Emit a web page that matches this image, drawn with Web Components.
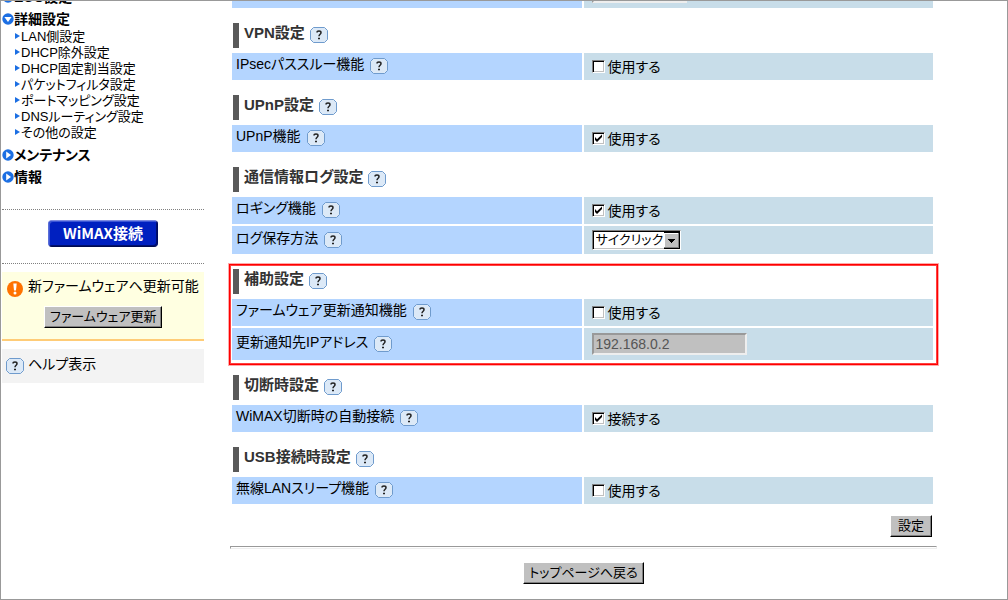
<!DOCTYPE html>
<html lang="ja">
<head>
<meta charset="utf-8">
<title>詳細設定 - その他の設定</title>
<style>
  body { margin: 0; background: #fff; color: #000; font: 14px/16px "Liberation Sans", "Noto Sans CJK JP", sans-serif; font-feature-settings: "palt"; }
</style>
</head>
<body>
<router-page></router-page>
<script>
const define = (name, html, setup) => {
  const template = document.createElement('template');
  template.innerHTML = html;
  customElements.define(name, class extends HTMLElement {
    constructor() {
      super();
      this.attachShadow({ mode: 'open' }).append(template.content.cloneNode(true));
    }
    connectedCallback() {
      if (setup && !this.ready) { this.ready = true; setup(this, this.shadowRoot); }
    }
  });
};

define('help-button', `
  <style>
    :host { display: inline-flex; flex: none; }
    button { display: flex; margin: 0; padding: 0; border: 0; background: none; cursor: help; }
    svg { display: block; }
  </style>
  <button type="button" aria-label="ヘルプ">
    <svg width="18" height="16" viewBox="0 0 18 16">
      <path d="M3.5.5h11l3 3v9l-3 3h-11l-3-3v-9z" fill="#dce9f7" stroke="#6f9bcd"/>
      <path d="M7 5.500C7 3.600 11 3.400 11 5.700C11 7.300 9 7.200 9 9.300M8 11.500h2" fill="none" stroke="#222" stroke-width="1.500"/>
    </svg>
  </button>`);

define('bevel-button', `
  <style>
    :host { display: inline-block; }
    button { display: block; margin: 0; min-width: 42px; height: 22px; padding: 0 5px; font: inherit; font-size: 13px; line-height: 18px; font-feature-settings: inherit; color: #000; background: #c0c0c0;
      border: 1px solid; border-color: #fff #000 #000 #fff; box-shadow: inset -1px -1px #808080; white-space: nowrap; border-radius: 0; }
  </style>
  <button type="button"><slot></slot></button>`);

define('nav-group', `
  <style>
    :host { display: block; margin-top: 6px; }
    a { display: flex; align-items: center; font-size: 14px; line-height: 16px; font-weight: bold; color: #000; text-decoration: none; white-space: nowrap; }
    ul { margin: 2px 0 0; padding: 0; list-style: none; }
    svg { flex: none; }
    :host(:not([open])) ul { display: none; }
  </style>
  <a href="#"><svg width="12" height="12" viewBox="0 0 12 12"><circle cx="6" cy="6" r="5.7" fill="#1c6fe3"/><path fill="#fff"/></svg><span></span></a>
  <ul><slot></slot></ul>`,
  (el, root) => {
    root.querySelector('span').textContent = el.getAttribute('label');
    root.querySelector('path').setAttribute('d', el.hasAttribute('open') ? 'M2.4 4h7.2L6 9z' : 'M4.2 2.6v6.8L9 6z');
  });

define('nav-item', `
  <style>
    :host { display: block; padding-left: 13px; }
    a { display: flex; align-items: center; gap: 1px; font-size: 13px; line-height: 16px; color: #000; text-decoration: none; white-space: nowrap; }
    svg { flex: none; }
  </style>
  <a href="#"><svg width="5" height="8" viewBox="0 0 5 8"><path d="M0 0v6l5-3z" fill="#1c6fe3"/></svg><slot></slot></a>`);

define('tick-field', `
  <style>
    :host { display: block; padding-top: 1px; }
    label { display: flex; align-items: center; gap: 3px; line-height: 16px; }
    input { appearance: none; flex: none; box-sizing: border-box; width: 13px; height: 13px; margin: 0 0 1px; background: #fff;
      border: 1px solid; border-color: #808080 #fff #fff #808080; box-shadow: inset 1px 1px #000, inset -1px -1px #c0c0c0; }
    input:checked { background: #fff url("data:image/svg+xml,%3Csvg xmlns='http://www.w3.org/2000/svg' viewBox='0 0 11 11'%3E%3Cpath d='M2 4v3l2 2 5-5V1.500L4 6.300z'/%3E%3C/svg%3E") center / 11px 11px no-repeat; }
  </style>
  <label><input type="checkbox"><slot></slot></label>`,
  (el, root) => { root.querySelector('input').checked = el.hasAttribute('checked'); });

define('choice-field', `
  <style>
    :host { display: grid; grid-template-columns: max-content; }
    select, svg { grid-area: 1 / 1; }
    select { appearance: none; box-sizing: border-box; height: 20px; margin: 0; padding: 0 16px 0 3px; font: inherit; font-size: 13px; line-height: 16px; font-feature-settings: inherit;
      color: #000; background: #fff; border: 1px solid; border-color: #808080 #fff #fff #808080; box-shadow: inset 1px 1px #000, inset -1px -1px #c0c0c0; border-radius: 0; outline: 0; }
    svg { justify-self: end; align-self: center; margin-right: 1px; pointer-events: none; }
  </style>
  <select><option></option></select>
  <svg width="16" height="17" viewBox="0 0 16 17" shape-rendering="crispEdges">
    <path d="M0 0h16v17H0z" fill="#000"/><path d="M0 1h15v15H0z" fill="#808080"/><path d="M0 1h14v14H0z" fill="#fff"/><path d="M1 2h13v13H1z" fill="#c0c0c0"/>
    <path d="M4 7h7v1h-1v1H9v1H8v1H7v-1H6V9H5V8H4z"/>
  </svg>`,
  (el, root) => {
    root.querySelector('option').textContent = el.getAttribute('value');
    root.querySelector('select').setAttribute('aria-label', el.getAttribute('label'));
  });

define('text-field', `
  <style>
    :host { display: block; }
    input { display: block; box-sizing: border-box; width: var(--width, 155px); height: 22px; margin: 0; padding: 0 2px; font: inherit; line-height: 18px;
      color: #555; background: #c0c0c0; border: 2px solid; border-color: #999 #eee #eee #999; border-radius: 0; }
  </style>
  <input type="text" disabled>`,
  (el, root) => {
    const input = root.querySelector('input');
    input.value = el.getAttribute('value');
    input.setAttribute('aria-label', el.getAttribute('label'));
  });

define('setting-row', `
  <style>
    :host { display: grid; grid-template-columns: 1fr 1fr; gap: 2px; min-height: var(--row, 27px); }
    div { display: flex; align-items: center; box-sizing: border-box; }
    .name { gap: 6px; padding: 0 4px 1px; background: #b4d5ff; }
    .name span { padding-bottom: 4px; line-height: 16px; }
    .value { padding-left: 8px; background: #c8dde9; }
  </style>
  <div class="name"><span></span><help-button></help-button></div>
  <div class="value"><slot></slot></div>`,
  (el, root) => { root.querySelector('span').textContent = el.getAttribute('label'); });

define('setting-section', `
  <style>
    :host { display: block; position: relative; margin: 15px 4px 0 2px; }
    h2 { display: flex; align-items: center; gap: 5px; height: 25px; margin: 0 0 5px 1px; padding: 0 0 2px 5px; border-left: 6px solid #595959; box-sizing: border-box;
      font-size: 15px; line-height: 20px; color: #333; }
    h2 span { padding-bottom: 3px; }
    .rows { display: grid; gap: 2px; }
    :host([marked])::after { content: ""; position: absolute; inset: -5px; left: -3px; border: 1px solid #f00; box-shadow: 0 0 0 1px #ffaaaa, inset 0 0 0 1px #ff4040; pointer-events: none; }
  </style>
  <h2><span></span><help-button></help-button></h2>
  <div class="rows"><slot></slot></div>`,
  (el, root) => { root.querySelector('span').textContent = el.getAttribute('label'); });

define('side-bar', `
  <style>
    :host { display: block; width: 203px; flex: none; }
    nav { padding-left: 1px; }
    .cut { display: flex; align-items: flex-end; height: 4px; overflow: hidden; }
    .connect { display: flex; justify-content: center; padding: 10px 0 16px; margin: 24px 0 0 1px; border: dotted #808080; border-width: 1px 0; }
    .connect button { height: 27px; padding: 0 14px 2px; font: bold 15px/20px "Noto Sans CJK JP", sans-serif; color: #fff; background: #0020c0; border: 1px solid; border-color: #7d8be0 #000a60 #000a50 #5a6ed8;
      border-radius: 4px; box-shadow: inset 1px 1px #3b55d6, inset -1px -1px #001070; white-space: nowrap; }
    .notice { margin: 8px 0 0 1px; padding: 6px 0 11px 5px; background: #ffffe1; border-bottom: 2px solid #ffcc77; }
    .notice p { display: flex; gap: 5px; margin: 0 0 9px; line-height: 17px; white-space: nowrap; }
    .notice p svg { flex: none; margin-top: 3px; }
    .notice div { padding-left: 37px; }
    .help { display: flex; gap: 4px; margin: 8px 0 0 1px; padding: 7px 4px 9px; line-height: 16px; background: #f3f3f3; }
    .help help-button { padding-top: 2px; }
  </style>
  <nav>
    <div class="cut"><nav-group label="ECO設定"></nav-group></div>
    <nav-group open label="詳細設定">
      <nav-item>LAN側設定</nav-item>
      <nav-item>DHCP除外設定</nav-item>
      <nav-item>DHCP固定割当設定</nav-item>
      <nav-item>パケットフィルタ設定</nav-item>
      <nav-item>ポートマッピング設定</nav-item>
      <nav-item>DNSルーティング設定</nav-item>
      <nav-item>その他の設定</nav-item>
    </nav-group>
    <nav-group label="メンテナンス"></nav-group>
    <nav-group label="情報"></nav-group>
  </nav>
  <div class="connect"><button type="button">WiMAX接続</button></div>
  <div class="notice">
    <p><svg width="16" height="16" viewBox="0 0 16 16"><circle cx="8" cy="8" r="8" fill="#ff7300"/><path d="M6.300 2.500h3.400L9 9.500H7z" fill="#fff"/><circle cx="8" cy="12" r="1.500" fill="#fff"/></svg>新ファームウェアへ更新可能</p>
    <div><bevel-button>ファームウェア更新</bevel-button></div>
  </div>
  <div class="help"><help-button></help-button>ヘルプ表示</div>`);

define('settings-panel', `
  <style>
    :host { display: block; flex: 1; min-width: 0; padding: 0 70px 15px 26px; }
    .cut { display: flex; align-items: flex-end; height: 7px; overflow: hidden; margin: 0 4px 0 2px; --row: 32px; --width: 95px; }
    .cut setting-row { flex: 1; }
    .apply { display: flex; justify-content: flex-end; margin: 11px 5px 9px 0; }
    hr { margin: 0; border: solid; border-width: 1px; border-color: #999 #eee #eee #999; height: 1px; }
    .back { display: flex; justify-content: center; margin-top: 13px; }
  </style>
  <div class="cut"><setting-row label=""><text-field label="設定値" value=""></text-field></setting-row></div>
  <form>
    <setting-section label="VPN設定">
      <setting-row label="IPsecパススルー機能"><tick-field>使用する</tick-field></setting-row>
    </setting-section>
    <setting-section label="UPnP設定">
      <setting-row label="UPnP機能"><tick-field checked>使用する</tick-field></setting-row>
    </setting-section>
    <setting-section label="通信情報ログ設定">
      <setting-row label="ロギング機能"><tick-field checked>使用する</tick-field></setting-row>
      <setting-row style="--row: 28px" label="ログ保存方法"><choice-field label="ログ保存方法" value="サイクリック"></choice-field></setting-row>
    </setting-section>
    <setting-section marked label="補助設定">
      <setting-row label="ファームウェア更新通知機能"><tick-field>使用する</tick-field></setting-row>
      <setting-row style="--row: 32px" label="更新通知先IPアドレス"><text-field label="更新通知先IPアドレス" value="192.168.0.2"></text-field></setting-row>
    </setting-section>
    <setting-section label="切断時設定">
      <setting-row label="WiMAX切断時の自動接続"><tick-field checked>接続する</tick-field></setting-row>
    </setting-section>
    <setting-section label="USB接続時設定">
      <setting-row label="無線LANスリープ機能"><tick-field>使用する</tick-field></setting-row>
    </setting-section>
    <div class="apply"><bevel-button>設定</bevel-button></div>
  </form>
  <hr>
  <div class="back"><bevel-button>トップページへ戻る</bevel-button></div>`);

define('router-page', `
  <style>
    :host { display: flex; box-sizing: border-box; min-height: 100vh; border: 1px solid #999; }
  </style>
  <side-bar></side-bar>
  <settings-panel></settings-panel>`);
</script>
</body>
</html>
